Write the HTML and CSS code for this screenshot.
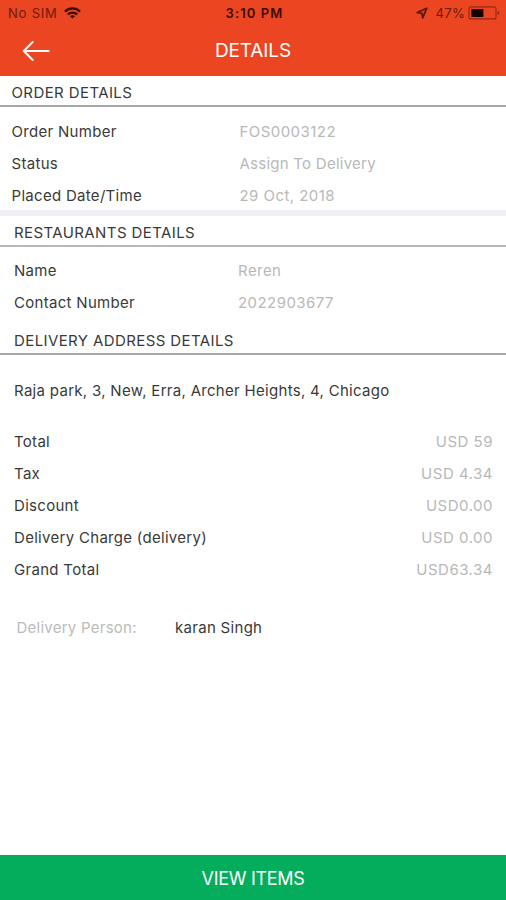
FILE: index.html
```html
<!DOCTYPE html>
<html lang="en">
<head>
    <meta charset="UTF-8">
    <title>Order Details</title>
    <link rel="stylesheet" href="styles.css">
</head>
<body>
    <div class="app">
        <header class="header">
            <div class="status-bar">
                <div class="status-left">
                    <span class="carrier">No SIM</span>
                    <svg class="wifi" width="17" height="12" viewBox="0 0 17 12" fill="none" stroke="#3a0d02" stroke-width="2.3">
                        <path d="M1 4.6C5.2 0.4 11.8 0.4 16 4.6"/>
                        <path d="M3.8 7.4C6.4 4.9 10.6 4.9 13.2 7.4"/>
                        <path d="M8.5 11.6L6 9.2C7.4 8 9.6 8 11 9.2Z" fill="#3a0d02" stroke="none"/>
                    </svg>
                </div>
                <span class="time">3:10 PM</span>
                <div class="status-right">
                    <svg class="location" width="12" height="12" viewBox="0 0 12 12" fill="none" stroke="#5c1605" stroke-width="1.7" stroke-linejoin="round">
                        <path d="M10.8 1.2L1.2 5.6L5.9 6.1L6.7 10.8Z"/>
                    </svg>
                    <span class="percent">47%</span>
                    <svg class="battery" width="33" height="14" viewBox="0 0 33 14">
                        <rect x="1" y="0.9" width="27" height="12" rx="2" fill="none" stroke="#96290f" stroke-width="1.1"/>
                        <rect x="3.4" y="2.9" width="12" height="8" rx="0.6" fill="#140300"/>
                        <path d="M29.5 5V9C31.8 8.4 31.8 5.6 29.5 5Z" fill="#96290f"/>
                    </svg>
                </div>
            </div>
            <div class="nav">
                <svg class="back" width="28" height="20" viewBox="0 0 28 20" fill="none" stroke="#fff" stroke-width="1.9" stroke-linecap="round" stroke-linejoin="round">
                    <path d="M10.7 1L1.8 10L10.7 19M1.8 10H26.8"/>
                </svg>
                <h1 class="title">DETAILS</h1>
            </div>
        </header>

        <main class="content">
            <section class="order">
                <h2 class="section-title">ORDER DETAILS</h2>
                <div class="rows">
                    <div class="row"><span class="label">Order Number</span><span class="value">FOS0003122</span></div>
                    <div class="row"><span class="label">Status</span><span class="value status">Assign To Delivery</span></div>
                    <div class="row"><span class="label">Placed Date/Time</span><span class="value">29 Oct, 2018</span></div>
                </div>
            </section>

            <section class="restaurant">
                <h2 class="section-title">RESTAURANTS DETAILS</h2>
                <div class="rows">
                    <div class="row"><span class="label">Name</span><span class="value">Reren</span></div>
                    <div class="row"><span class="label">Contact Number</span><span class="value">2022903677</span></div>
                </div>
            </section>

            <section class="address">
                <h2 class="section-title">DELIVERY ADDRESS DETAILS</h2>
                <p class="address-text">Raja park, 3, New, Erra, Archer Heights, 4, Chicago</p>
            </section>

            <section class="totals">
                <div class="total-row"><span class="label">Total</span><span class="value">USD 59</span></div>
                <div class="total-row"><span class="label">Tax</span><span class="value">USD 4.34</span></div>
                <div class="total-row"><span class="label">Discount</span><span class="value">USD0.00</span></div>
                <div class="total-row"><span class="label">Delivery Charge (delivery)</span><span class="value">USD 0.00</span></div>
                <div class="total-row"><span class="label">Grand Total</span><span class="value">USD63.34</span></div>
            </section>

            <div class="person">
                <span class="person-label">Delivery Person:</span>
                <span class="person-name">karan Singh</span>
            </div>
        </main>

        <button class="btn-view">VIEW ITEMS</button>
    </div>
</body>
</html>
```

FILE: styles.css
```css
* {
    box-sizing: border-box;
}

body {
    margin: 0;
    font-family: Inter, Roboto, sans-serif;
    font-size: 15px;
    letter-spacing: 0.3px;
    color: #3a3a3a;
    background-color: #fff;
}

.app {
    display: flex;
    flex-direction: column;
    height: 900px;
}

.header {
    height: 76px;
    background-color: #ec4521;
}

.status-bar {
    display: grid;
    grid-template-columns: 1fr auto 1fr;
    align-items: center;
    height: 26px;
    padding: 0 5px 0 8px;
    font-size: 13px;
    color: #6b1c0a;
}

.status-left,
.status-right {
    display: flex;
    align-items: center;
}

.status-left {
    gap: 6px;
}

.status-right {
    justify-content: flex-end;
}

.carrier {
    letter-spacing: 0.8px;
}

.time {
    font-weight: 600;
    letter-spacing: 1.1px;
    color: #3a0d02;
}

.percent {
    margin: 0 3px 0 8px;
}

.nav {
    display: grid;
    grid-template-columns: 1fr auto 1fr;
    align-items: center;
    height: 50px;
    padding: 0 22px;
}

.title {
    margin: -2px 0 0;
    font-size: 19px;
    font-weight: 400;
    letter-spacing: -0.1px;
    color: #fff;
}

.content {
    flex: 1;
}

.section-title {
    display: flex;
    align-items: center;
    height: 31px;
    margin: 0;
    padding: 3px 14px 0;
    border-bottom: 2px solid #a5a5a5;
    font-size: 15px;
    font-weight: 400;
    letter-spacing: 0.4px;
}

.rows {
    padding: 9px 14px 0;
}

.row {
    display: flex;
    align-items: center;
    height: 31.7px;
}

.row .label {
    width: 224px;
}

.value {
    color: #b8b8b8;
}

.row .value {
    letter-spacing: 0.45px;
}

.row .status {
    letter-spacing: 0.25px;
}

.order {
    height: 140px;
    border-bottom: 6px solid #efeff4;
}

.order .section-title {
    padding-top: 4px;
    padding-left: 11.5px;
}

.order .rows {
    padding-left: 11.5px;
}

.order .row .label {
    width: 228px;
}

.restaurant {
    height: 109px;
}

.restaurant .section-title {
    border-color: #b8b8b8;
}

.restaurant .rows {
    padding-top: 8px;
}

.address .section-title {
    height: 30px;
    padding-top: 2px;
}

.address-text {
    margin: 0;
    padding: 26px 14px 25px;
    line-height: 20px;
}

.totals {
    padding: 0 13px 0 14px;
}

.total-row {
    display: flex;
    align-items: center;
    justify-content: space-between;
    height: 31.8px;
}

.total-row .value {
    letter-spacing: 0.5px;
}

.person {
    display: flex;
    align-items: center;
    height: 32px;
    margin-top: 27px;
    padding-left: 16.5px;
}

.person-label {
    width: 158.5px;
    letter-spacing: 0.25px;
    color: #bbb;
}

.btn-view {
    height: 45px;
    padding-top: 2px;
    border: none;
    font-family: inherit;
    font-size: 18px;
    letter-spacing: -0.3px;
    color: #fff;
    background-color: #03ad5c;
    cursor: pointer;
}
```
